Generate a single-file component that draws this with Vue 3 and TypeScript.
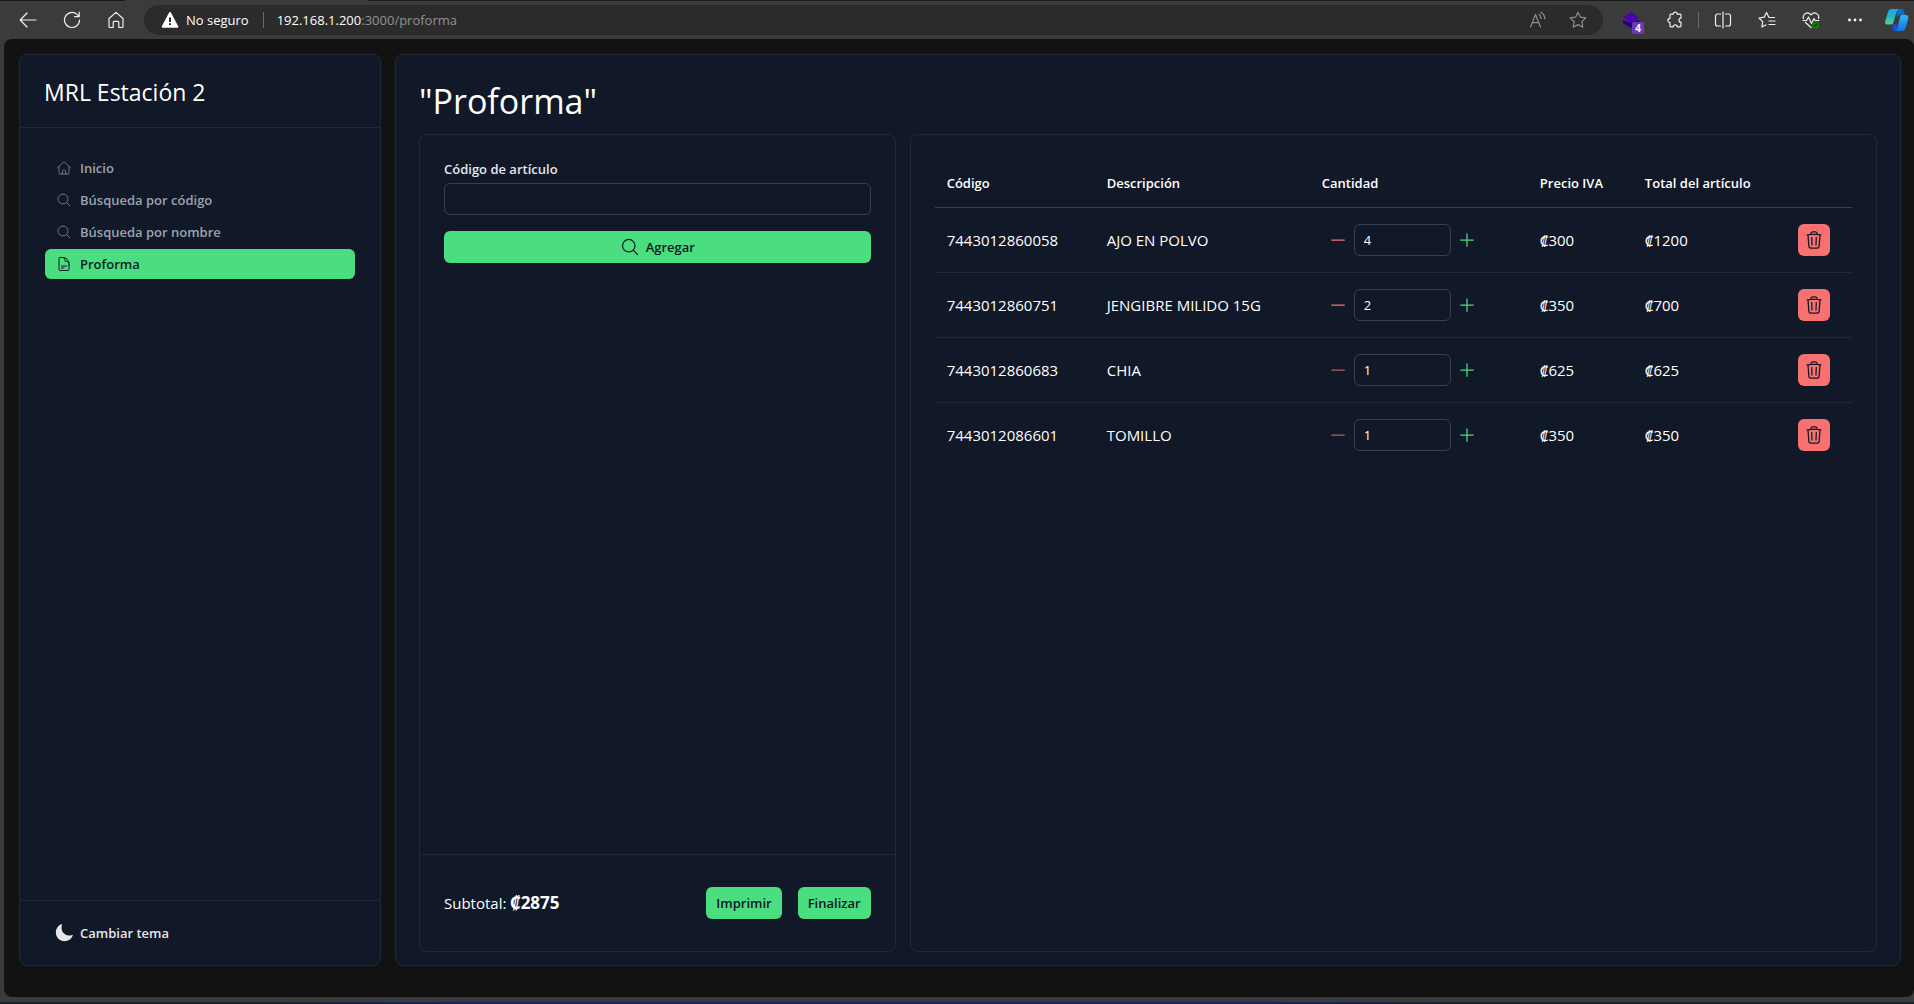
<script setup lang="ts">
import { computed, reactive, ref } from 'vue'

interface Item {
  code: string
  name: string
  qty: number
  price: number
}

const paths = {
  home: 'm2.25 12 8.954-8.955c.44-.439 1.152-.439 1.591 0L21.75 12M4.5 9.75v10.125c0 .621.504 1.125 1.125 1.125H9.75v-4.875c0-.621.504-1.125 1.125-1.125h2.25c.621 0 1.125.504 1.125 1.125V21h4.125c.621 0 1.125-.504 1.125-1.125V9.75M8.25 21h8.25',
  search: 'm21 21-5.197-5.197m0 0A7.5 7.5 0 1 0 5.196 5.196a7.5 7.5 0 0 0 10.607 10.607Z',
  doc: 'M19.5 14.25v-2.625a3.375 3.375 0 0 0-3.375-3.375h-1.5A1.125 1.125 0 0 1 13.5 7.125v-1.5a3.375 3.375 0 0 0-3.375-3.375H8.25m0 12.75h7.5m-7.5 3H12M10.5 2.25H5.625c-.621 0-1.125.504-1.125 1.125v17.25c0 .621.504 1.125 1.125 1.125h12.75c.621 0 1.125-.504 1.125-1.125V11.25a9 9 0 0 0-9-9Z',
  trash: 'm14.74 9-.346 9m-4.788 0L9.26 9m9.968-3.21c.342.052.682.107 1.022.166m-1.022-.165L18.16 19.673a2.25 2.25 0 0 1-2.244 2.077H8.084a2.25 2.25 0 0 1-2.244-2.077L4.772 5.79m14.456 0a48.108 48.108 0 0 0-3.478-.397m-12 .562c.34-.059.68-.114 1.022-.165m0 0a48.11 48.11 0 0 1 3.478-.397m7.5 0v-.916c0-1.18-.91-2.164-2.09-2.201a51.964 51.964 0 0 0-3.32 0c-1.18.037-2.09 1.022-2.09 2.201v.916m7.5 0a48.667 48.667 0 0 0-7.5 0',
  plus: 'M12 4.5v15m7.5-7.5h-15',
  minus: 'M19.5 12h-15',
}

const links = [
  { label: 'Inicio', icon: paths.home, active: false },
  { label: 'Búsqueda por código', icon: paths.search, active: false },
  { label: 'Búsqueda por nombre', icon: paths.search, active: false },
  { label: 'Proforma', icon: paths.doc, active: true },
]

const items = reactive<Item[]>([
  { code: '7443012860058', name: 'AJO EN POLVO', qty: 4, price: 300 },
  { code: '7443012860751', name: 'JENGIBRE MILIDO 15G', qty: 2, price: 350 },
  { code: '7443012860683', name: 'CHIA', qty: 1, price: 625 },
  { code: '7443012086601', name: 'TOMILLO', qty: 1, price: 350 },
])

const code = ref('')
const subtotal = computed(() => items.reduce((sum, i) => sum + i.qty * i.price, 0))
</script>

<template>
  <div class="browser">
    <header class="toolbar">
      <button class="tool" type="button" aria-label="Atrás">
        <svg width="18" height="18" viewBox="0 0 18 18"><path d="M17 9H1.5M8 2 1.2 9 8 16" /></svg>
      </button>
      <button class="tool" type="button" aria-label="Actualizar">
        <svg width="18" height="18" viewBox="0 0 18 18"><path d="M16.5 9A7.5 7.5 0 1 1 14 3.4L16 5.5M16.2 1v4.7h-4.6" /></svg>
      </button>
      <button class="tool" type="button" aria-label="Página principal">
        <svg width="18" height="18" viewBox="0 0 18 18"><path d="M2 7.5 9 1.4l7 6.1v8.2a.8.8 0 0 1-.8.8h-3.4v-5.2a1 1 0 0 0-1-1H7.2a1 1 0 0 0-1 1v5.2H2.8a.8.8 0 0 1-.8-.8Z" /></svg>
      </button>
      <div class="address">
        <svg class="warn" width="18" height="18" viewBox="0 0 18 18">
          <path class="tri" d="M9 2 16.3 15.8H1.7Z" />
          <path class="mark" d="M9 6.5v4.5M9 12.3v1.8" />
        </svg>
        <span class="insecure">No seguro</span>
        <span class="sep"></span>
        <span class="url"><span class="host">192.168.1.200</span>:3000/proforma</span>
        <button class="tool dim" type="button" aria-label="Leer en voz alta">
          <svg width="18" height="18" viewBox="0 0 18 18"><path d="M1.5 16 6.5 3.5 11.5 16M3.3 11.7h6.4M10 3.5c1.3.9 2 2.2 2 4M12 1.2c2.5 1.5 3.8 3.8 3.8 6.8" /></svg>
        </button>
        <button class="tool dim" type="button" aria-label="Agregar a favoritos">
          <svg width="18" height="18" viewBox="0 0 18 18"><path d="m9 1.2 2.4 5 5.4.7-4 3.8 1 5.5L9 13.6l-4.8 2.6 1-5.500-4-3.800 5.400-.700Z" /></svg>
        </button>
      </div>
      <button class="tool ext" type="button" aria-label="Extensión">
        <svg width="18" height="18" viewBox="0 0 18 18">
          <path fill="#1e0080" stroke="none" d="m1 9 8 3 8-3v3l-8 5-8-5Z" />
          <path fill="#4b00b5" stroke="none" d="m9 1 8 5.5-8 5.5-8-5.5Z" />
        </svg>
        <span class="badge">4</span>
      </button>
      <button class="tool" type="button" aria-label="Extensiones">
        <svg width="18" height="18" viewBox="0 0 18 18"><path d="M4 4.2a1 1 0 0 1 1-1h2.2a2 2 0 1 1 4 0H14a1 1 0 0 1 1 1v3a2 2 0 1 0 0 4v3.600a1 1 0 0 1-1 1h-2.800a2 2 0 1 0-4 0H5a1 1 0 0 1-1-1v-3.300a2.100 2.100 0 1 1 0-4.200Z" /></svg>
      </button>
      <span class="sep gap"></span>
      <button class="tool" type="button" aria-label="Pantalla dividida">
        <svg width="18" height="18" viewBox="0 0 18 18"><path d="M6.5 3H3.5a2 2 0 0 0-2 2v8a2 2 0 0 0 2 2h3M11.5 3h3a2 2 0 0 1 2 2v8a2 2 0 0 1-2 2h-3M9 1v16" /></svg>
      </button>
      <button class="tool" type="button" aria-label="Favoritos">
        <svg width="18" height="18" viewBox="0 0 18 18"><path d="M16.5 6.5H11L8.5 1.5 6.2 6.2 1 7l3.7 3.7-.8 5.3L8 13.8M11 10h6M11 13.5h6" /></svg>
      </button>
      <button class="tool" type="button" aria-label="Rendimiento">
        <svg width="18" height="18" viewBox="0 0 18 18">
          <path d="M1.500 7.500C.2 3 5.500-.2 9 3.800c3.500-4 8.800-.8 7.500 3.700M1 9.500h3.500L6.500 6l3 6.500 2.500-5 1 2h4M3.500 11.500 9 16.500" />
          <circle cx="13.5" cy="14" r="3.8" fill="#137a13" stroke="none" />
          <path class="tick" d="m12 14 1 1 2-2.2" />
        </svg>
      </button>
      <button class="tool" type="button" aria-label="Configuración y más">
        <svg width="18" height="18" viewBox="0 0 18 18">
          <g fill="#fff" stroke="none"><circle cx="3.5" cy="9" r="1.4" /><circle cx="9" cy="9" r="1.4" /><circle cx="14.5" cy="9" r="1.4" /></g>
        </svg>
      </button>
      <button class="tool copilot" type="button" aria-label="Copilot">
        <svg width="26" height="26" viewBox="0 0 26 26">
          <defs>
            <linearGradient id="cpA" x1="0" y1="0" x2="0" y2="1"><stop offset="0" stop-color="#1aa7e0" /><stop offset=".5" stop-color="#21b5c4" /><stop offset="1" stop-color="#5fd08f" /></linearGradient>
            <linearGradient id="cpB" x1="0" y1="0" x2="0" y2="1"><stop offset="0" stop-color="#35b4f5" /><stop offset="1" stop-color="#1173ea" /></linearGradient>
          </defs>
          <g stroke="none">
            <path fill="#0c6fc0" d="M12 2h5.5c1.5 0 2 1 2.5 2.5L21 8h-4.5c-2 0-3 1-3.5 2.5Z" />
            <path fill="#1a4fd0" d="M8 17.5h6L12.5 24H11c-1.5 0-2-1-2.5-2.5Z" />
            <path fill="url(#cpA)" d="M7.5 2H15c-1.5.5-2 1.5-2.5 3L9.5 15c-.6 1.8-1.5 2.5-3 2.5H3.5C1.5 17.5.7 16 1.2 14L4 5c.6-2 1.8-3 3.5-3Z" />
            <path fill="url(#cpB)" d="M18.5 8h3.3c2 0 3 1.5 2.5 3.5l-2.6 9c-.6 2-1.9 3.5-3.9 3.5H11c1.5-.5 2-1.5 2.5-3l2.5-10.5C16.5 8.7 17 8 18.5 8Z" />
          </g>
        </svg>
      </button>
    </header>

    <div class="page">
      <aside class="panel sidebar">
        <div class="brand">MRL Estación 2</div>
        <nav class="nav">
          <a v-for="l in links" :key="l.label" href="#" class="link" :class="{ active: l.active }">
            <svg class="icon small" viewBox="0 0 24 24"><path :d="l.icon" /></svg>
            {{ l.label }}
          </a>
        </nav>
        <div class="theme">
          <button class="theme-btn" type="button">
            <svg class="moon" viewBox="0 0 24 24"><path d="M9.528 1.718a.75.75 0 0 1 .162.819A8.97 8.97 0 0 0 9 6a9 9 0 0 0 9 9 8.97 8.97 0 0 0 3.463-.69.75.75 0 0 1 .981.98 10.503 10.503 0 0 1-9.694 6.46c-5.799 0-10.5-4.7-10.5-10.5 0-4.368 2.667-8.112 6.46-9.694a.75.75 0 0 1 .818.162Z" /></svg>
            Cambiar tema
          </button>
        </div>
      </aside>

      <main class="panel main">
        <h1>"Proforma"</h1>
        <div class="cards">
          <section class="card entry">
            <form class="form" @submit.prevent>
              <label for="code">Código de artículo</label>
              <input id="code" v-model="code" class="field" type="text" />
              <button class="btn wide" type="submit">
                <svg class="icon" viewBox="0 0 24 24"><path :d="paths.search" /></svg>
                Agregar
              </button>
            </form>
            <div class="totals">
              <p>Subtotal: <strong>₡{{ subtotal }}</strong></p>
              <button class="btn" type="button">Imprimir</button>
              <button class="btn" type="button">Finalizar</button>
            </div>
          </section>

          <section class="card list">
            <table>
              <colgroup>
                <col class="c-code" /><col class="c-name" /><col class="c-qty" />
                <col class="c-price" /><col class="c-total" /><col class="c-del" />
              </colgroup>
              <thead>
                <tr>
                  <th>Código</th><th>Descripción</th><th>Cantidad</th>
                  <th>Precio IVA</th><th>Total del artículo</th><th></th>
                </tr>
              </thead>
              <tbody>
                <tr v-for="(item, i) in items" :key="item.code">
                  <td>{{ item.code }}</td>
                  <td>{{ item.name }}</td>
                  <td>
                    <div class="qty">
                      <button class="step minus" type="button" aria-label="Restar" :disabled="item.qty <= 1" @click="item.qty--">
                        <svg class="icon" viewBox="0 0 24 24"><path :d="paths.minus" /></svg>
                      </button>
                      <input v-model.number="item.qty" class="field" type="number" min="1" :aria-label="'Cantidad de ' + item.name" />
                      <button class="step plus" type="button" aria-label="Sumar" @click="item.qty++">
                        <svg class="icon" viewBox="0 0 24 24"><path :d="paths.plus" /></svg>
                      </button>
                    </div>
                  </td>
                  <td>₡{{ item.price }}</td>
                  <td>₡{{ item.qty * item.price }}</td>
                  <td>
                    <button class="delete" type="button" aria-label="Eliminar" @click="items.splice(i, 1)">
                      <svg class="icon" viewBox="0 0 24 24"><path :d="paths.trash" /></svg>
                    </button>
                  </td>
                </tr>
              </tbody>
            </table>
          </section>
        </div>
      </main>
    </div>
    <div class="taskbar"></div>
  </div>
</template>

<style>
body {
  margin: 0;
  background: #3b3b3b;
}
</style>

<style scoped>
* {
  box-sizing: border-box;
}
button,
input {
  font: inherit;
  color: inherit;
  margin: 0;
  padding: 0;
  border: 0;
  background: none;
}
.browser {
  min-height: 100vh;
  display: flex;
  flex-direction: column;
  background: #3b3b3b;
  font-family: "Open Sans", "Noto Sans", sans-serif;
  font-size: 15px;
  line-height: 24px;
  color: #fff;
}

/* Browser toolbar */
.toolbar {
  display: flex;
  align-items: center;
  gap: 12px;
  height: 39px;
  padding: 1px 0 0 12px;
  background: linear-gradient(90deg, #1b1b1b 125px, transparent 125px, transparent 368px, #1b1b1b 368px) top / 100% 1px no-repeat;
}
.tool {
  position: relative;
  width: 32px;
  height: 30px;
  display: flex;
  align-items: center;
  justify-content: center;
  flex: none;
}
.tool svg {
  flex: none;
  fill: none;
  stroke: #f0f0f0;
  stroke-width: 1.2;
  stroke-linejoin: round;
  stroke-linecap: round;
}
.dim svg {
  stroke: #8c8c8c;
}
.tool .tick {
  stroke: #0b3d0b;
}
.address {
  flex: 1;
  height: 30px;
  border-radius: 15px;
  background: #2b2b2b;
  display: flex;
  align-items: center;
  padding: 0 9px 0 17px;
  font-size: 13px;
}
.address .dim + .dim {
  margin-left: 8px;
}
.warn .tri {
  fill: #fff;
  stroke: #fff;
  stroke-width: 2;
  stroke-linejoin: round;
}
.warn .mark {
  stroke: #2b2b2b;
  stroke-width: 2;
}
.insecure {
  margin-left: 7px;
}
.sep {
  width: 1px;
  height: 16px;
  margin: 0 13px 0 14px;
  background: #6b6b6b;
}
.sep.gap {
  margin: 0 -4px 0 -5px;
}
.url {
  flex: 1;
  color: #929292;
}
.host {
  color: #fff;
}
.badge {
  position: absolute;
  left: 17px;
  top: 17px;
  width: 12px;
  height: 12px;
  border-radius: 2px;
  background: #6a3ab8;
  font-size: 10px;
  font-weight: 700;
  line-height: 12px;
  text-align: center;
}
.copilot {
  width: 31px;
  padding-right: 3px;
}

/* Page */
.page {
  flex: 1;
  display: flex;
  gap: 14px;
  margin-left: 4px;
  padding: 15px 13px 31px 15px;
  border-radius: 8px;
  background: #121212;
}
.panel {
  border: 1px solid #1f2937;
  border-radius: 8px;
  background: #111827;
}
.sidebar {
  flex: 0 0 362px;
  display: flex;
  flex-direction: column;
}
.brand {
  padding: 21px 24px 19px;
  border-bottom: 1px solid #1f2937;
  font-size: 23px;
  line-height: 32px;
}
.nav {
  flex: 1;
  display: flex;
  flex-direction: column;
  gap: 2px;
  padding: 25px;
}
.link {
  display: flex;
  align-items: center;
  gap: 8px;
  height: 30px;
  padding: 0 11px;
  border-radius: 6px;
  color: #9ca3af;
  font-size: 13px;
  font-weight: 600;
  text-decoration: none;
}
.link .icon {
  stroke: #6b7280;
}
.link.active {
  background: #4ade80;
  color: #111827;
}
.link.active .icon {
  stroke: #111827;
}
.icon {
  width: 20px;
  height: 20px;
  flex: none;
  fill: none;
  stroke: currentColor;
  stroke-width: 1.5;
  stroke-linecap: round;
  stroke-linejoin: round;
}
.icon.small {
  width: 16px;
  height: 16px;
}
.theme {
  border-top: 1px solid #1f2937;
  padding: 16px 24px;
}
.theme-btn {
  display: flex;
  align-items: center;
  gap: 6px;
  height: 32px;
  padding: 0 10px;
  font-size: 13px;
  font-weight: 600;
  color: #e5e7eb;
}
.moon {
  width: 20px;
  height: 20px;
  fill: currentColor;
}
.main {
  flex: 1;
  min-width: 0;
  display: flex;
  flex-direction: column;
  padding: 23px 23px 13px;
}
h1 {
  margin: 0 0 10px;
  font-size: 34px;
  font-weight: 400;
  line-height: 46px;
}
.cards {
  flex: 1;
  display: grid;
  grid-template-columns: 1fr 1fr 1fr;
  gap: 14px;
}
.card {
  min-width: 0;
  border: 1px solid #1f2937;
  border-radius: 8px;
}
.entry {
  display: flex;
  flex-direction: column;
}
.list {
  grid-column: span 2;
  padding: 24px;
}
.form {
  flex: 1;
  display: flex;
  flex-direction: column;
  padding: 24px;
}
label {
  margin-bottom: 4px;
  line-height: 20px;
  font-size: 13px;
  font-weight: 600;
  color: #e5e7eb;
}
.field {
  height: 32px;
  padding: 0 9px;
  border: 1px solid #374151;
  border-radius: 6px;
  font-size: 13px;
  appearance: textfield;
}
.field::-webkit-inner-spin-button {
  appearance: none;
  margin: 0;
}
.btn {
  display: flex;
  align-items: center;
  justify-content: center;
  gap: 6px;
  height: 32px;
  padding: 0 10px;
  border-radius: 6px;
  background: #4ade80;
  color: #111827;
  font-size: 13px;
  font-weight: 600;
}
.btn.wide {
  margin-top: 16px;
}
.totals {
  display: flex;
  align-items: center;
  gap: 16px;
  padding: 32px 24px;
  border-top: 1px solid #1f2937;
}
.totals p {
  flex: 1;
  margin: 0;
}
.totals strong {
  font-size: 17px;
}

/* Article table */
table {
  width: 100%;
  table-layout: fixed;
  border-collapse: separate;
  border-spacing: 0;
}
.c-code {
  width: 160px;
}
.c-name {
  width: 215px;
}
.c-qty {
  width: 218px;
}
.c-price {
  width: 105px;
}
.c-total {
  width: 153px;
}
.c-del {
  width: 66px;
}
th,
td {
  padding: 0 12px;
  text-align: left;
  white-space: nowrap;
}
th {
  height: 49px;
  border-bottom: 1px solid #374151;
  font-size: 13px;
  font-weight: 600;
}
td {
  height: 65px;
  border-bottom: 1px solid #1f2937;
}
tbody tr:last-child td {
  border-bottom-color: transparent;
}
.qty {
  display: flex;
  align-items: center;
}
.qty .field {
  width: 97px;
}
.step {
  width: 32px;
  height: 32px;
  display: flex;
  align-items: center;
  justify-content: center;
}
.minus {
  color: #f87171;
}
.minus:disabled {
  opacity: 0.75;
}
.plus {
  color: #4ade80;
}
.delete {
  width: 32px;
  height: 32px;
  display: flex;
  align-items: center;
  justify-content: center;
  border-radius: 6px;
  background: #f87171;
  color: #111827;
}

/* Edge of the desktop taskbar under the window */
.taskbar {
  height: 7px;
  background: linear-gradient(90deg, #1c2230 15%, #14246a 25%, #14246a 65%, #1c2230 75%) bottom / 100% 2px no-repeat;
}
</style>
